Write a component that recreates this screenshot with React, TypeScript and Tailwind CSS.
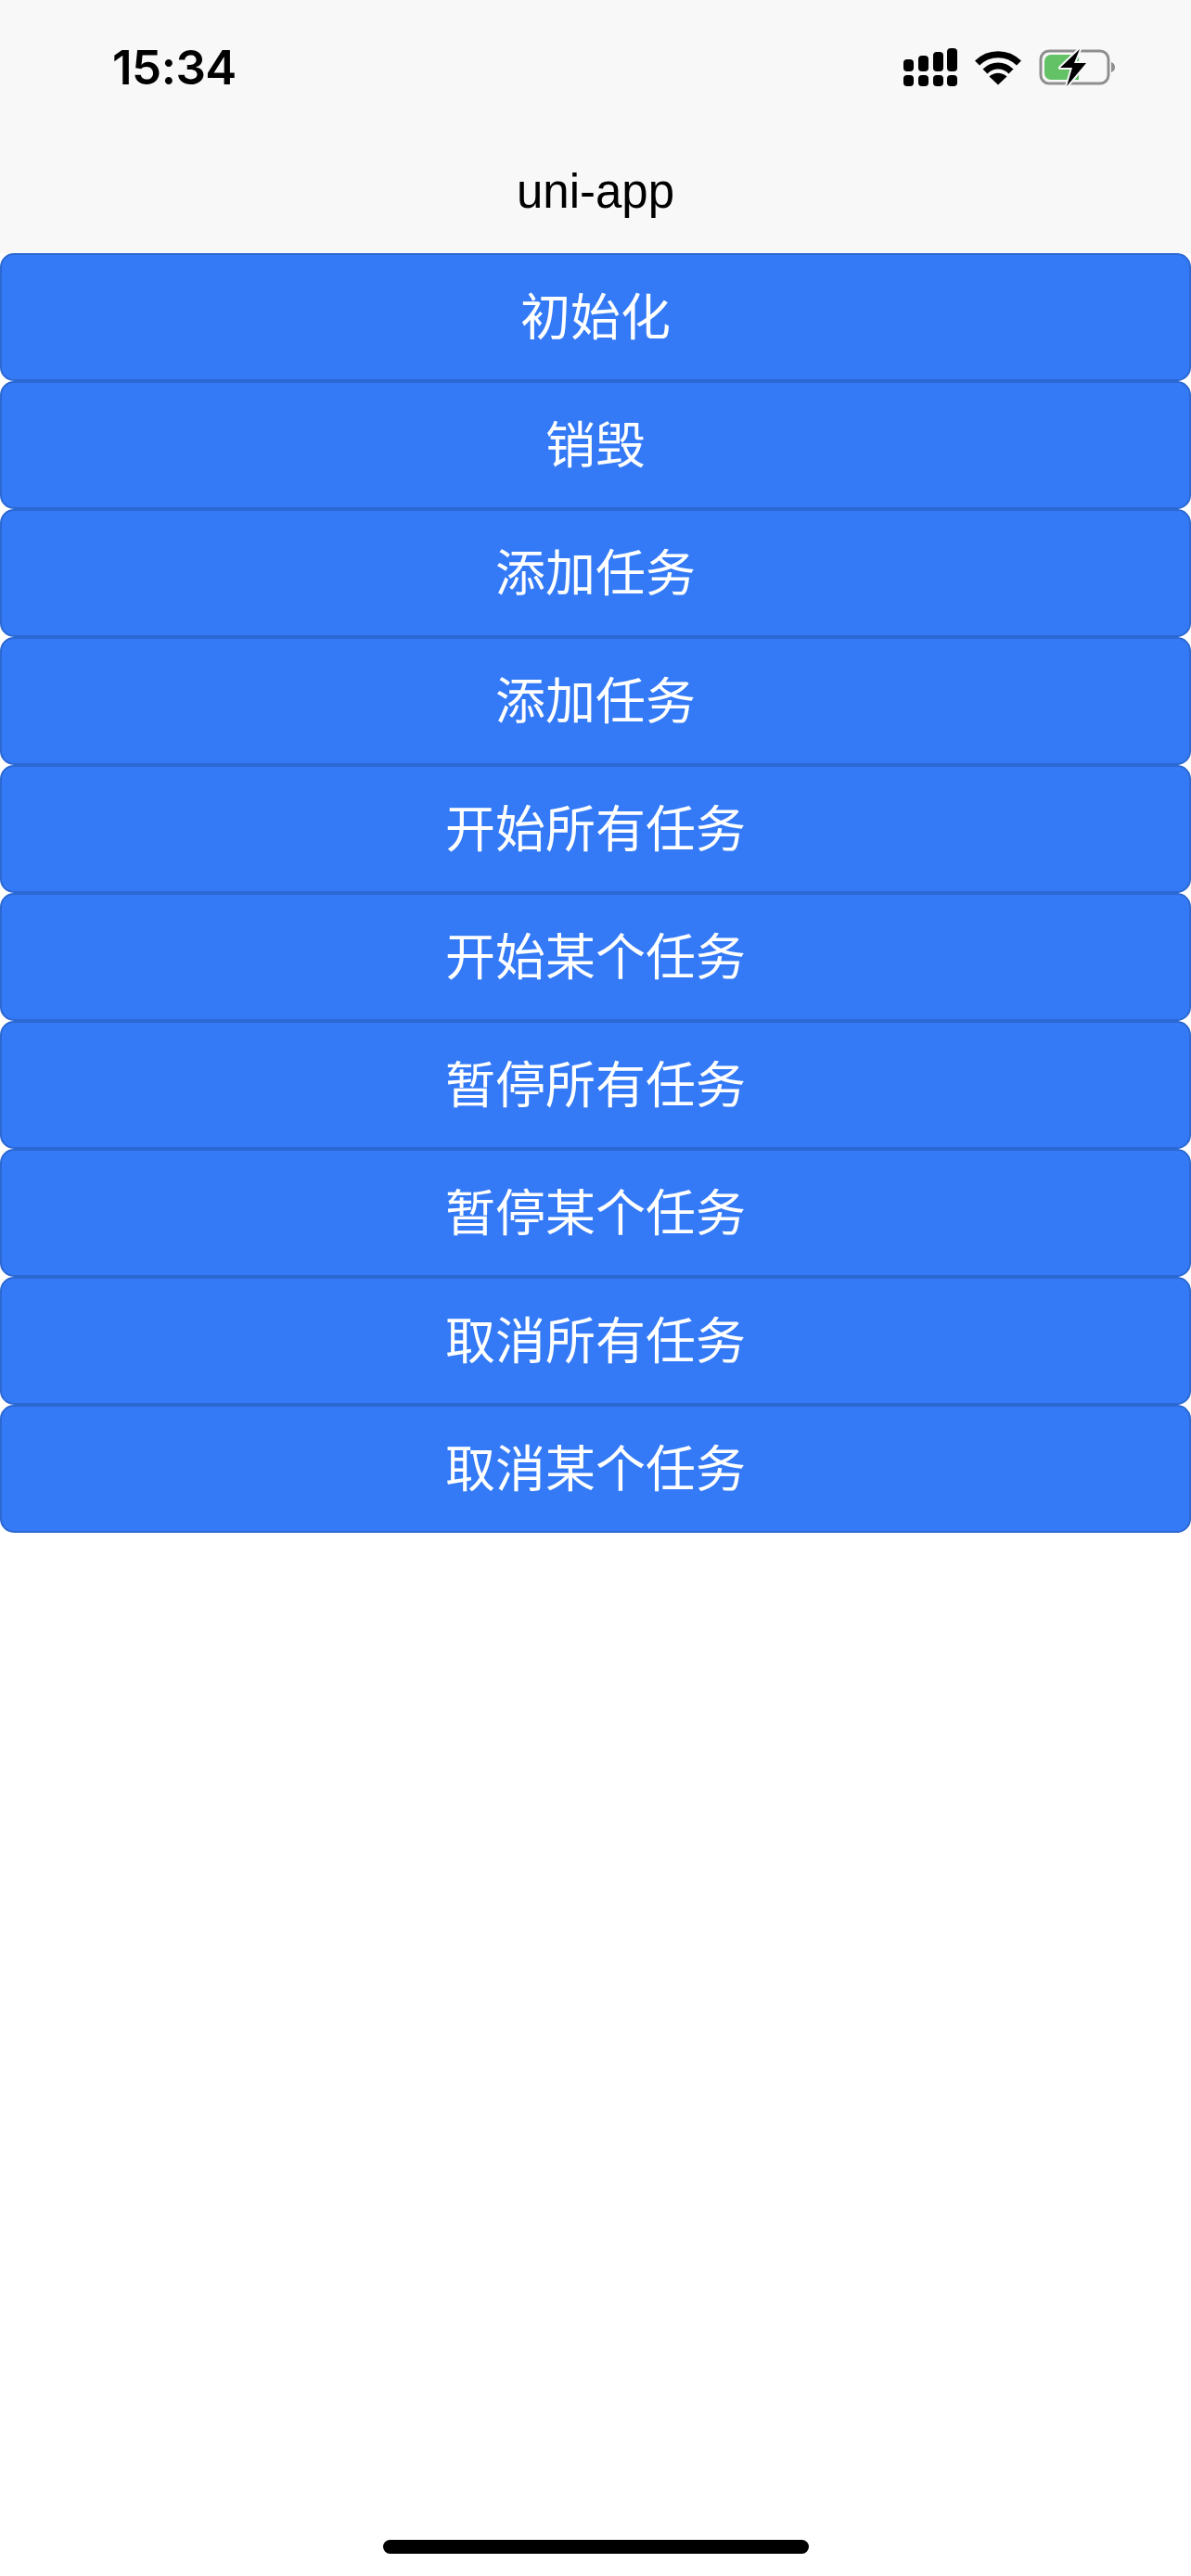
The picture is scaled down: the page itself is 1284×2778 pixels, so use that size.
import React from 'react';

const actions = [
  '初始化',
  '销毁',
  '添加任务',
  '添加任务',
  '开始所有任务',
  '开始某个任务',
  '暂停所有任务',
  '暂停某个任务',
  '取消所有任务',
  '取消某个任务',
];

const SignalIcon = () => (
  <svg width="58" height="42" viewBox="0 0 58 42" fill="#000">
    <rect x="0" y="12" width="11" height="13" rx="4" />
    <rect x="16" y="8" width="11" height="17" rx="4" />
    <rect x="32" y="4" width="11" height="21" rx="4" />
    <rect x="47" y="0" width="11" height="25" rx="4" />
    <rect x="0" y="29" width="11" height="12" rx="4" />
    <rect x="16" y="29" width="11" height="12" rx="4" />
    <rect x="32" y="29" width="11" height="12" rx="4" />
    <rect x="47" y="29" width="11" height="12" rx="4" />
  </svg>
);

const WifiIcon = () => (
  <svg width="50" height="38" viewBox="0 0 50 38" fill="none" stroke="#000" strokeWidth="7">
    <path d="M2.5 14C15 1.500 35 1.500 47.5 14" />
    <path d="M11 23C19 15 31 15 39 23" />
    <path d="M15.500 28.500L25 37.500L34.500 28.500C28.500 23.500 21.500 23.500 15.500 28.500Z" fill="#000" stroke="none" />
  </svg>
);

const BatteryIcon = () => (
  <svg width="84" height="42" viewBox="0 0 84 42" fill="none">
    <rect x="2" y="3" width="73" height="35" rx="9" stroke="#8f8f8f" strokeWidth="3" />
    <path d="M6 14a7 7 0 0 1 7-7h30v27H13a7 7 0 0 1-7-7z" fill="#63c266" />
    <path d="M78 15c3 1 4 3 4 5.500s-1 4.500-4 5.500z" fill="#8f8f8f" />
    {/* charging bolt, outlined so it cuts into the fill */}
    <path
      d="M44 1L23 21H36L30 41L51 16H38L44 1Z"
      fill="#000"
      stroke="#f8f8f8"
      strokeWidth="4"
      paintOrder="stroke"
      strokeLinejoin="round"
    />
  </svg>
);

const App: React.FC = () => {
  return (
    <div className="w-[1284px] h-[2778px] bg-white flex flex-col font-['Liberation_Sans','Noto_Sans_CJK_SC',sans-serif]">
      <header className="h-[273px] bg-[#f8f8f8] flex flex-col shrink-0">
        <div className="h-[162px] pl-[121px] pr-[80px] pt-[41px] flex items-start justify-between">
          <span className="font-['Inter',sans-serif] font-semibold text-[51px] leading-[64px] text-black tracking-[-0.5px]">15:34</span>
          <div className="flex items-center gap-[19px] pt-[11px]">
            <SignalIcon />
            <WifiIcon />
            <BatteryIcon />
          </div>
        </div>
        <h1 className="text-center text-[51px] leading-[60px] font-normal text-black mt-[15px]">uni-app</h1>
      </header>

      <main className="flex flex-col">
        {actions.map((label, i) => (
          <button
            key={i}
            className="h-[138px] w-full rounded-[15px] bg-[#347af6] border-[2px] border-[#2c68d2] text-white text-[54px] leading-none flex items-center justify-center pt-[1px]"
          >
            {label}
          </button>
        ))}
      </main>

      <div className="mt-auto pb-[24px] flex justify-center">
        <div className="w-[459px] h-[15px] rounded-full bg-black" />
      </div>
    </div>
  );
};

export default App;
